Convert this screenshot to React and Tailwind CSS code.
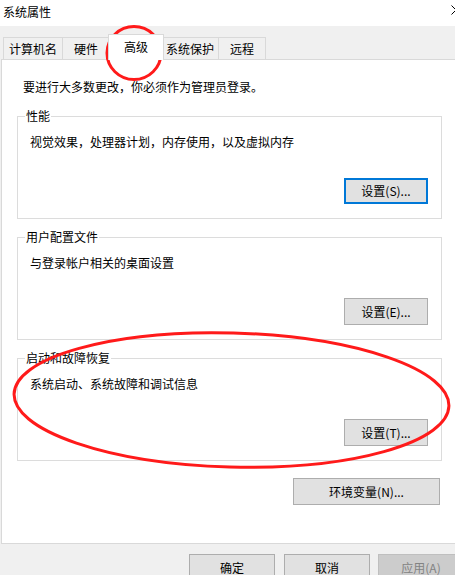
function Tab({ label, active, w }) {
  if (active) {
    return (
      <div
        className={`relative z-10 -mt-[3px] -mb-px -mx-[2px] h-[26px] ${w} flex items-center justify-center pb-[2px] bg-white border-t border-x border-[#d9d9d9]`}
      >
        {label}
      </div>
    );
  }
  return (
    <div
      className={`-ml-px first:ml-0 h-[22px] ${w} flex items-center justify-center border-t border-x border-[#d9d9d9] bg-[#f0f0f0]`}
    >
      {label}
    </div>
  );
}

function GroupBox({ title, text, button, focused }) {
  return (
    <div className="h-[103px] w-[425px] border border-[#dcdcdc] flex flex-col pt-[17px] pl-[12px] pr-[13px]">
      <span className="self-start -mt-[26px] -ml-[5px] mb-[10px] bg-white px-[1px]">{title}</span>
      <p>{text}</p>
      <div className="mt-auto mb-[14px] flex justify-end">
        <button
          className={
            focused
              ? "h-[26px] w-[84px] bg-[#e1e1e1] border-2 border-[#0078d7] flex items-center justify-center"
              : "h-[27px] w-[84px] bg-[#e1e1e1] border border-[#adadad] flex items-center justify-center"
          }
        >
          {button}
        </button>
      </div>
    </div>
  );
}

export default function App() {
  return (
    <div className="relative w-[455px] h-[575px] overflow-hidden bg-[#f0f0f0] text-[12px] leading-[16px] text-black font-['Noto_Sans_CJK_SC',sans-serif]">
      {/* title bar */}
      <div className="h-[26px] bg-white pl-[3px] pt-[4px]">系统属性</div>
      <svg className="absolute left-[451px] top-[5px]" width="10" height="10" viewBox="0 0 10 10">
        <path d="M0.5 0.5 L9.5 9.5 M9.5 0.5 L0.5 9.5" stroke="#000" strokeWidth="1" fill="none" />
      </svg>

      {/* tabs */}
      <div className="mt-[11px] flex items-start pl-[3px]">
        <Tab label="计算机名" w="w-[60px]" />
        <Tab label="硬件" w="w-[48px]" />
        <Tab label="高级" w="w-[56px]" active />
        <Tab label="系统保护" w="w-[58px]" />
        <Tab label="远程" w="w-[48px]" />
      </div>

      {/* panel */}
      <div className="ml-[1px] w-[470px] h-[485px] bg-white border border-[#d9d9d9]">
        <p className="pl-[21px] pt-[19px]">要进行大多数更改，你必须作为管理员登录。</p>
        <div className="ml-[15px] mt-[21px] flex flex-col gap-[18px]">
          <GroupBox title="性能" text="视觉效果，处理器计划，内存使用，以及虚拟内存" button="设置(S)..." focused />
          <GroupBox title="用户配置文件" text="与登录帐户相关的桌面设置" button="设置(E)..." />
          <GroupBox title="启动和故障恢复" text="系统启动、系统故障和调试信息" button="设置(T)..." />
        </div>
        <div className="ml-[15px] w-[425px] mt-[17px] flex justify-end pr-[2px]">
          <button className="h-[27px] w-[147px] bg-[#e1e1e1] border border-[#adadad] flex items-center justify-center">
            环境变量(N)...
          </button>
        </div>
      </div>

      {/* footer */}
      <div className="mt-[10px] flex">
        <button className="ml-[189px] h-[27px] w-[86px] shrink-0 bg-[#e1e1e1] border border-[#adadad] flex items-center justify-center">
          确定
        </button>
        <button className="ml-[9px] h-[27px] w-[86px] shrink-0 bg-[#e1e1e1] border border-[#adadad] flex items-center justify-center">
          取消
        </button>
        <button className="ml-[8px] h-[27px] w-[86px] shrink-0 bg-[#cccccc] border border-[#bfbfbf] text-[#838383] flex items-center justify-center">
          应用(A)
        </button>
      </div>

      {/* red annotations */}
      <svg className="absolute inset-0 pointer-events-none" width="455" height="575" viewBox="0 0 455 575">
        <ellipse cx="134" cy="53" rx="27" ry="26.5" fill="none" stroke="#ff1a1a" strokeWidth="3" />
        <ellipse
          cx="231.5"
          cy="400"
          rx="217.5"
          ry="67"
          fill="none"
          stroke="#ff1a1a"
          strokeWidth="3"
          transform="rotate(1.6 231.5 400)"
        />
      </svg>
    </div>
  );
}
